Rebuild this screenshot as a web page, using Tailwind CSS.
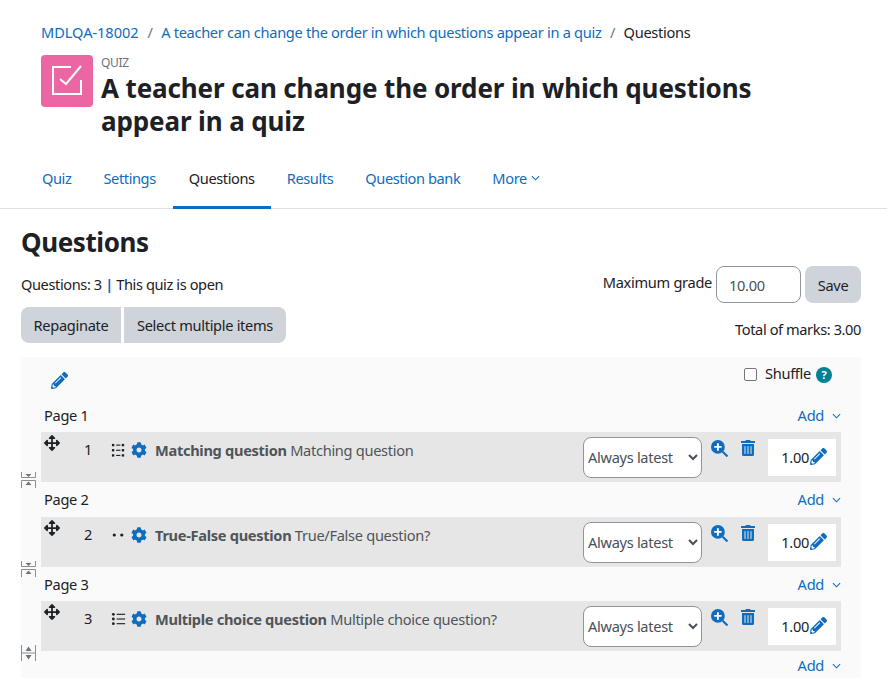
<!DOCTYPE html>
<html>
<head>
<meta charset="utf-8">
<script src="https://cdn.jsdelivr.net/npm/@tailwindcss/browser@4"></script>
</head>
<body class="bg-white text-[#1d2125] text-[14.6px] leading-[22px] font-['Noto_Sans',sans-serif] tracking-[-0.3px] overflow-hidden h-[691px]">

<!-- Page header -->
<header class="px-[41px] pt-[21px]">
  <nav class="flex items-center gap-[8.5px] h-[22px]">
    <a class="text-[#0f6cbf] w-[98px] tracking-[-0.05px]">MDLQA-18002</a>
    <span class="text-[#6a737b]">/</span>
    <a class="text-[#0f6cbf]">A teacher can change the order in which questions appear in a quiz</a>
    <span class="text-[#6a737b]">/</span>
    <span>Questions</span>
  </nav>
  <div class="flex gap-[8px] mt-[12px]">
    <div class="w-[52px] h-[52px] rounded-[4px] bg-[#eb66a2] shrink-0">
      <svg viewBox="0 0 52 52" class="w-[52px] h-[52px]" fill="none" stroke="#fff" stroke-width="2">
        <path d="M30 12H12V39H40V25"/>
        <path d="M19 24l6 5L40 11"/>
      </svg>
    </div>
    <div class="min-w-0">
      <div class="text-[12px] leading-[15px] mb-[2px] text-[#6a737b]">QUIZ</div>
      <h1 class="text-[26px] leading-[33px] font-bold tracking-[-0.12px] w-[690px]">A teacher can change the order in which questions appear in a quiz</h1>
    </div>
  </div>
</header>

<!-- Tabs -->
<nav class="flex pl-[27px] mt-[15px] h-[56px] border-b border-[#dee2e6] tracking-[-0.4px]">
  <a class="px-[16px] h-[56px] flex items-center pb-[7px] -ml-[1px] text-[#0f6cbf]">Quiz</a>
  <a class="px-[16px] h-[56px] flex items-center pb-[7px] text-[#0f6cbf]">Settings</a>
  <a class="px-[16px] h-[56px] flex items-center pb-[4px] ml-[1px] border-b-[3px] border-[#0f6cbf]">Questions</a>
  <a class="px-[16px] h-[56px] flex items-center pb-[7px] text-[#0f6cbf]">Results</a>
  <a class="px-[16px] h-[56px] flex items-center pb-[7px] text-[#0f6cbf]">Question bank</a>
  <a class="px-[16px] h-[56px] flex items-center pb-[7px] gap-[4px] text-[#0f6cbf]">More
    <svg viewBox="0 0 10 6" class="w-[9px] h-[6px]" fill="none" stroke="#0f6cbf" stroke-width="1.2"><path d="M1 1l4 4 4-4"/></svg>
  </a>
</nav>

<main class="px-[21px] w-[882px]">
  <h2 class="text-[26px] leading-[34px] font-bold tracking-[-0.4px] mt-[16px]">Questions</h2>

  <div class="flex justify-between mt-[8px]">
    <div>
      <div class="h-[22px] mt-[6px] tracking-[-0.4px]">Questions: 3 <span class="text-[#0f6cbf] font-bold">|</span> This quiz is open</div>
      <div class="flex gap-[3px] mt-[12px]">
        <button class="h-[36px] w-[100px] bg-[#ced4da] rounded-l-[8px]">Repaginate</button>
        <button class="h-[36px] w-[162px] bg-[#ced4da] rounded-r-[8px]">Select multiple items</button>
      </div>
    </div>
    <div class="flex flex-col items-end -mt-[1px]">
      <div class="flex items-center gap-[4px]">
        <span class="mb-[6px]">Maximum grade</span>
        <div class="w-[85px] h-[37px] border border-[#8f959e] rounded-[8px] pl-[12px] flex items-center text-[#495057]">10.00</div>
        <button class="w-[56px] h-[37px] bg-[#ced4da] rounded-[8px]">Save</button>
      </div>
      <div class="mt-[15px] tracking-[-0.4px]">Total of marks: 3.00</div>
    </div>
  </div>

  <!-- Slots panel -->
  <section id="slots" class="relative bg-[#fafafa] mt-[14px] h-[321px] w-[840px] px-[20px]">
    <div class="flex justify-between h-[41px] pt-[14px]">
      <svg viewBox="0 0 512 512" class="w-[17px] h-[17px] ml-[10px] mt-[1px]" fill="#0f6cbf"><path d="M497.9 142.1l-46.1 46.1c-4.7 4.7-12.3 4.7-17 0l-111-111c-4.7-4.7-4.7-12.3 0-17l46.1-46.1c18.7-18.7 49.1-18.7 67.9 0l60.1 60.1c18.8 18.7 18.8 49.1 0 67.9zM284.2 99.8L21.6 362.4.4 483.9c-2.9 16.4 11.4 30.6 27.8 27.8l121.5-21.3 262.6-262.6c4.7-4.7 4.7-12.3 0-17l-111-111c-4.8-4.7-12.4-4.7-17.1 0zM124.1 339.9c-5.5-5.5-5.5-14.3 0-19.8l154-154c5.5-5.5 14.3-5.5 19.8 0s5.5 14.3 0 19.8l-154 154c-5.5 5.5-14.3 5.5-19.8 0zM88 424h48v36.3l-64.5 11.3-31.1-31.1L51.7 376H88v48z"/></svg>
      <div class="flex items-center gap-[8px] h-[22px] mr-[9px] -mt-[9px]">
        <span class="w-[13px] h-[13px] border border-[#767676] rounded-[2px] bg-white mt-[3px]"></span>
        <span class="mr-[-3px]">Shuffle</span>
        <span class="w-[16px] h-[16px] rounded-full bg-[#008196] text-white text-[11px] leading-[16px] font-bold text-center mt-[3px]">?</span>
      </div>
    </div>
  </section>
</main>

<script>
var pencil = '<svg viewBox="0 0 512 512" class="w-[17px] h-[17px]" fill="#0f6cbf"><path d="M497.9 142.1l-46.1 46.1c-4.7 4.7-12.3 4.7-17 0l-111-111c-4.7-4.7-4.7-12.3 0-17l46.1-46.1c18.7-18.7 49.1-18.7 67.9 0l60.1 60.1c18.8 18.7 18.8 49.1 0 67.9zM284.2 99.8L21.6 362.4.4 483.9c-2.9 16.4 11.4 30.6 27.8 27.8l121.5-21.3 262.6-262.6c4.7-4.7 4.7-12.3 0-17l-111-111c-4.8-4.7-12.4-4.7-17.1 0zM124.1 339.9c-5.5-5.5-5.5-14.3 0-19.8l154-154c5.5-5.5 14.3-5.5 19.8 0s5.5 14.3 0 19.8l-154 154c-5.5 5.5-14.3 5.5-19.8 0zM88 424h48v36.3l-64.5 11.3-31.1-31.1L51.7 376H88v48z"/></svg>';
var move = '<svg viewBox="0 0 512 512" class="absolute left-[3px] top-[3px] w-[16px] h-[16px]" fill="#1d2125"><path d="M352.201 425.775l-79.196 79.196c-9.373 9.373-24.568 9.373-33.941 0l-79.196-79.196c-15.119-15.119-4.411-40.971 16.971-40.97h51.162L228 284H127.196v51.162c0 21.382-25.851 32.09-40.971 16.971L7.029 272.937c-9.373-9.373-9.373-24.569 0-33.941L86.225 159.8c15.119-15.119 40.971-4.411 40.971 16.971V228H228V127.196h-51.23c-21.382 0-32.09-25.851-16.971-40.971l79.196-79.196c9.373-9.373 24.568-9.373 33.941 0l79.196 79.196c15.119 15.119 4.411 40.971-16.971 40.971h-51.162V228h100.804v-51.162c0-21.382 25.851-32.09 40.97-16.971l79.196 79.196c9.373 9.373 9.373 24.569 0 33.941L425.773 352.2c-15.119 15.119-40.971 4.411-40.97-16.971V284H284v100.804h51.23c21.382 0 32.09 25.851 16.971 40.971z"/></svg>';
var gear = '<svg viewBox="0 0 512 512" class="w-[16px] h-[16px] mt-[10px] ml-[5px]" fill="#0f6cbf"><path d="M487.4 315.7l-42.6-24.6c4.3-23.2 4.3-47 0-70.2l42.6-24.6c4.9-2.8 7.1-8.6 5.5-14-11.1-35.6-30-67.8-54.7-94.6-3.8-4.1-10-5.1-14.8-2.3L380.8 110c-17.9-15.4-38.5-27.3-60.8-35.1V25.8c0-5.6-3.9-10.5-9.4-11.7-36.7-8.2-74.3-7.8-109.2 0-5.5 1.2-9.4 6.1-9.4 11.7V75c-22.2 7.9-42.8 19.8-60.8 35.1L88.7 85.5c-4.9-2.8-11-1.9-14.8 2.3-24.7 26.7-43.6 58.9-54.7 94.6-1.7 5.4.6 11.2 5.5 14L67.3 221c-4.3 23.2-4.3 47 0 70.2l-42.6 24.6c-4.9 2.8-7.1 8.6-5.5 14 11.1 35.6 30 67.8 54.7 94.6 3.8 4.1 10 5.1 14.8 2.3l42.6-24.6c17.9 15.4 38.5 27.3 60.8 35.1v49.2c0 5.6 3.9 10.5 9.4 11.7 36.7 8.2 74.3 7.8 109.2 0 5.5-1.2 9.4-6.1 9.4-11.7v-49.2c22.2-7.9 42.8-19.8 60.8-35.1l42.6 24.6c4.9 2.8 11 1.9 14.8-2.3 24.7-26.7 43.6-58.9 54.7-94.6 1.5-5.5-.7-11.3-5.6-14.1zM256 336c-44.1 0-80-35.9-80-80s35.9-80 80-80 80 35.9 80 80-35.9 80-80 80z"/></svg>';
var zoom = '<svg viewBox="0 0 16 16" class="w-[17px] h-[17px] mt-[8px] ml-[9px]"><circle cx="6.5" cy="6.5" r="6.5" fill="#0f6cbf"/><path d="M6.5 3v7M3 6.5h7" stroke="#fff" stroke-width="1.8"/><path d="M11 11l4.5 4.5" stroke="#0f6cbf" stroke-width="2"/></svg>';
var trash = '<svg viewBox="0 0 448 512" class="w-[14px] h-[16px] mt-[8px] ml-[13px]" fill="#0f6cbf"><path d="M32 464a48 48 0 0 0 48 48h288a48 48 0 0 0 48-48V128H32zm272-256a16 16 0 0 1 32 0v224a16 16 0 0 1-32 0zm-96 0a16 16 0 0 1 32 0v224a16 16 0 0 1-32 0zm-96 0a16 16 0 0 1 32 0v224a16 16 0 0 1-32 0zM432 32H312l-9.4-18.7A24 24 0 0 0 281.1 0H166.8a23.72 23.72 0 0 0-21.4 13.3L136 32H16A16 16 0 0 0 0 48v32a16 16 0 0 0 16 16h416a16 16 0 0 0 16-16V48a16 16 0 0 0-16-16z"/></svg>';
var chevron = '<svg viewBox="0 0 10 6" class="w-[9px] h-[6px] mt-[9px]" fill="none" stroke="#0f6cbf" stroke-width="1.2"><path d="M1 1l4 4 4-4"/></svg>';

var typeIcons = {
  match: '<rect x="1" y="1.500" width="2.500" height="2.500"/><rect x="1" y="7" width="2.500" height="2.500"/><rect x="1" y="12.500" width="2.500" height="2.500"/><rect x="5.500" y="2.200" width="4.500" height="1.200"/><rect x="5.500" y="7.700" width="4.500" height="1.200"/><rect x="5.500" y="13.200" width="4.500" height="1.200"/><rect x="11.500" y="1.500" width="2.500" height="2.500"/><rect x="11.500" y="7" width="2.500" height="2.500"/><rect x="11.500" y="12.500" width="2.500" height="2.500"/>',
  truefalse: '<circle cx="3.500" cy="8" r="1.700"/><circle cx="11.500" cy="8" r="1.700"/>',
  multi: '<circle cx="2.500" cy="3" r="1.500"/><circle cx="2.500" cy="8" r="1.500"/><circle cx="2.500" cy="13" r="1.500"/><rect x="6" y="2.400" width="9" height="1.200"/><rect x="6" y="7.400" width="9" height="1.200"/><rect x="6" y="12.400" width="9" height="1.200"/>'
};

// split between pages / join pages icon at the bottom left of each slot
var splitIcon = '<path d="M.5 0V5.500H14.500V0M.5 16V8.500H14.500V16" /><path d="M7.500 5L4.500 2H10.500zM7.500 9.500L4.500 13H10.500z" fill="#6f7478" stroke="none"/>';
var joinIcon = '<path d="M.5 0V16M14.500 0V16M0 8H15"/><path d="M7.500 1.500L4.500 6H10.500zM7.500 14.500L4.500 10H10.500z" fill="#6f7478" stroke="none"/>';

var slots = [
  { page: 'Page 1', head: 'h-[34px]', n: 1, type: 'match', name: 'Matching question', text: 'Matching question', top: 'top-[40px]', link: splitIcon },
  { page: 'Page 2', head: 'h-[35px]', n: 2, type: 'truefalse', name: 'True-False question', text: 'True/False question?', top: 'top-[44px]', link: splitIcon },
  { page: 'Page 3', head: 'h-[34px]', n: 3, type: 'multi', name: 'Multiple choice question', text: 'Multiple choice question?', top: 'top-[44px]', link: joinIcon }
];

var html = '';
slots.forEach(function (s) {
  html += `
    <div class="flex justify-between ${s.head} pt-[6px] pl-[3px]">
      <span>${s.page}</span>
      <a class="text-[#0f6cbf] flex items-start gap-[8px]">Add ${chevron}</a>
    </div>
    <div class="relative flex h-[50px] bg-[#e6e6e6]">
      ${move}
      <span class="w-[64px] pl-[43px] pt-[6px]">${s.n}</span>
      <svg viewBox="0 0 16 16" class="w-[15px] h-[16px] mt-[10px] ml-[6px]" fill="#1d2125">${typeIcons[s.type]}</svg>
      ${gear}
      <span class="ml-[8px] pt-[7px] text-[#4f5459] w-[428px]"><b>${s.name}</b> ${s.text}</span>
      <select class="w-[119px] h-[41px] mt-[5px] pb-[2px] border border-[#8f959e] rounded-[8px] bg-white text-[#495057]"><option>Always latest</option></select>
      ${zoom}
      ${trash}
      <div class="w-[68px] h-[37px] bg-white mt-[7px] ml-[13px] pb-[2px] flex items-center justify-end pr-[9px] gap-[1px]">1.00${pencil}</div>
      <svg viewBox="0 0 15 16" class="absolute left-[-20px] ${s.top} w-[15px] h-[16px]" fill="none" stroke="#8a8f94">${s.link}</svg>
    </div>`;
});
html += `
    <div class="flex justify-end h-[27px] pt-[3px]">
      <a class="text-[#0f6cbf] flex items-start gap-[8px]">Add ${chevron}</a>
    </div>`;
document.getElementById('slots').insertAdjacentHTML('beforeend', html);
</script>
</body>
</html>
